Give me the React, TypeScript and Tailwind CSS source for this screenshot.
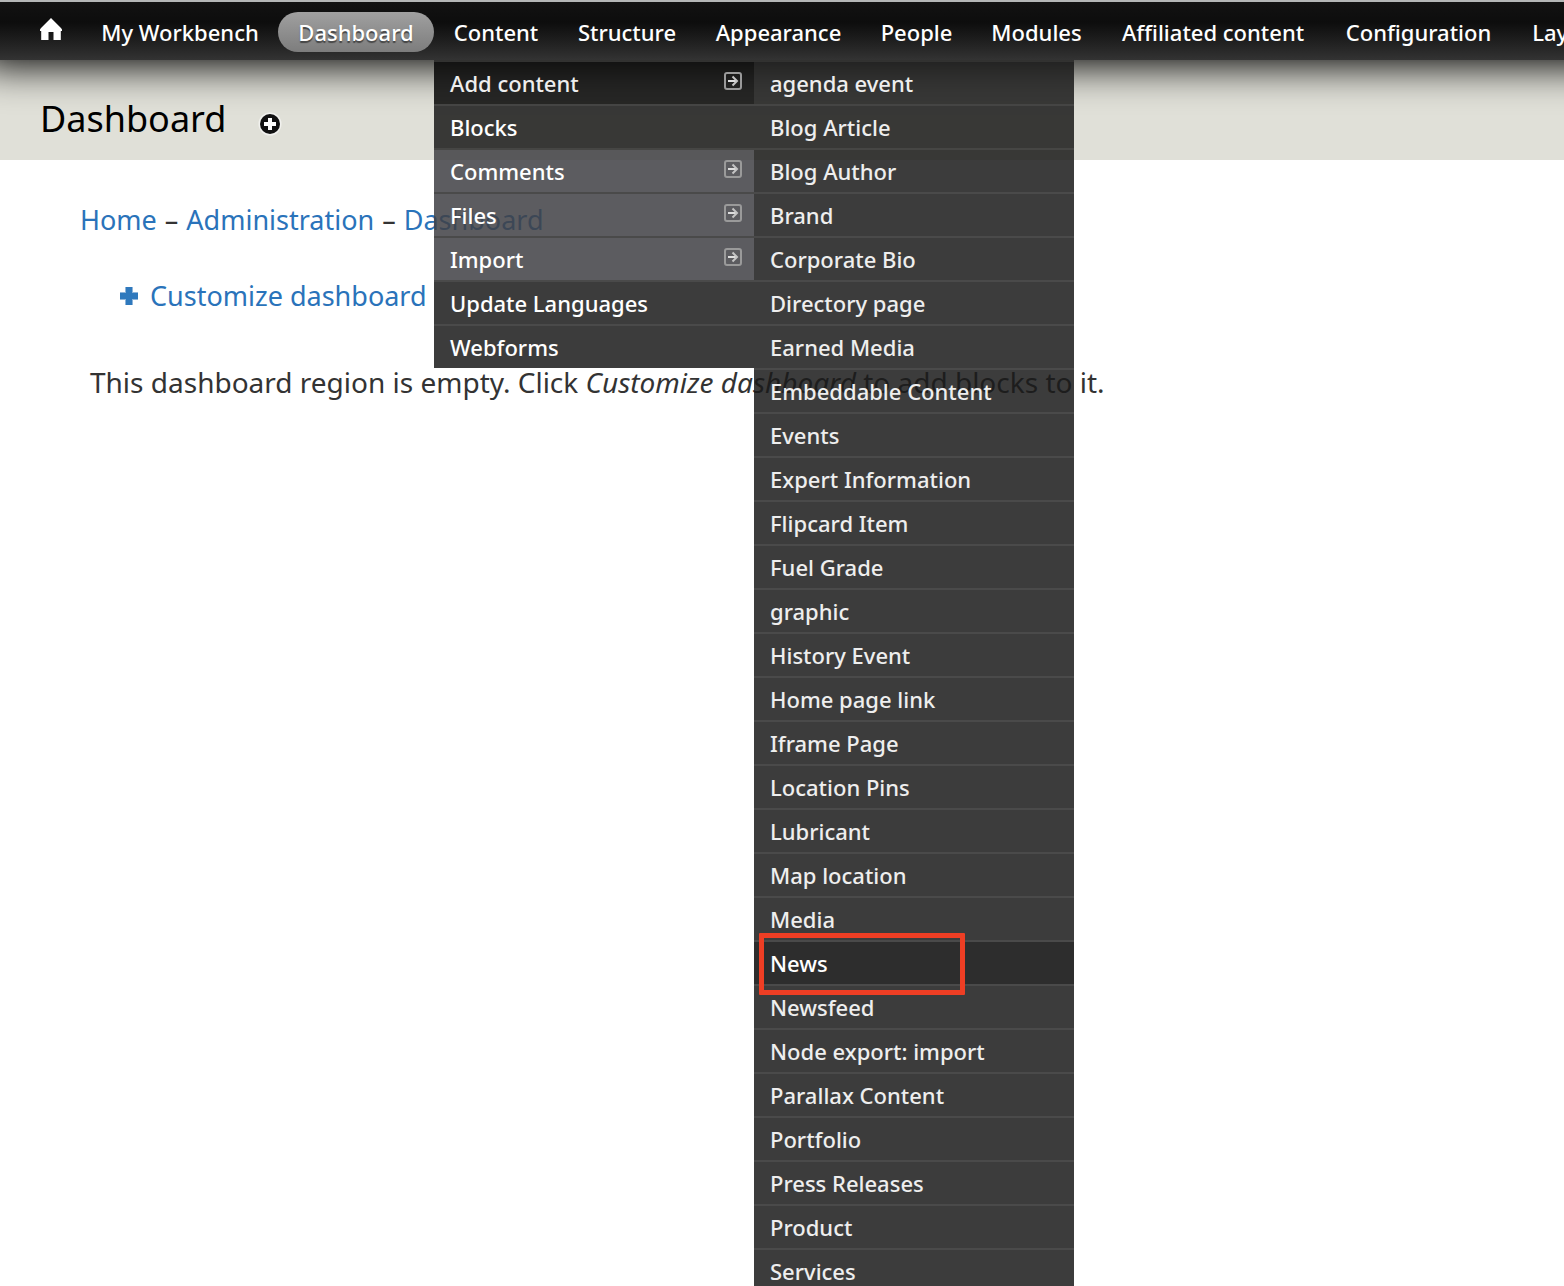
import React from "react";

const navItems = [
  { label: "My Workbench", width: "w-[196px]" },
  { label: "Dashboard", width: "w-[156px]", active: true },
  { label: "Content", width: "w-[124px]", menu: true },
  { label: "Structure", width: "w-[138px]" },
  { label: "Appearance", width: "w-[165px]" },
  { label: "People", width: "w-[111px]" },
  { label: "Modules", width: "w-[129px]" },
  { label: "Affiliated content", width: "w-[224px]" },
  { label: "Configuration", width: "w-[187px]" },
  { label: "Layout", width: "w-[112px]" },
];

const contentMenu = [
  { label: "Add content", tone: "bg-[#060606]/85 text-[#eeeeee]", arrow: true },
  { label: "Blocks", tone: "bg-[#1a1a1a]/85 text-white" },
  { label: "Comments", tone: "bg-[#403f44]/85 text-white", arrow: true },
  { label: "Files", tone: "bg-[#403f44]/85 text-white", arrow: true },
  { label: "Import", tone: "bg-[#403f44]/85 text-white", arrow: true },
  { label: "Update Languages", tone: "bg-[#1a1a1a]/85 text-white" },
  { label: "Webforms", tone: "bg-[#1a1a1a]/85 text-white" },
];

const contentTypes = [
  "agenda event",
  "Blog Article",
  "Blog Author",
  "Brand",
  "Corporate Bio",
  "Directory page",
  "Earned Media",
  "Embeddable Content",
  "Events",
  "Expert Information",
  "Flipcard Item",
  "Fuel Grade",
  "graphic",
  "History Event",
  "Home page link",
  "Iframe Page",
  "Location Pins",
  "Lubricant",
  "Map location",
  "Media",
  "News",
  "Newsfeed",
  "Node export: import",
  "Parallax Content",
  "Portfolio",
  "Press Releases",
  "Product",
  "Services",
];

const rowClass =
  "flex h-11 items-center border-t-2 border-[#2a2a2a]/85 bg-clip-padding px-4 text-[22px] leading-7 font-medium whitespace-nowrap";

function HomeIcon() {
  return (
    <svg className="mb-1" width="24" height="24" viewBox="0 0 24 24" fill="white" aria-hidden="true">
      <path d="M12 1 L22 11 Q23.5 12.5 23 14 L21.8 14 L21.8 23 L14.5 23 L14.5 15 L9.5 15 L9.5 23 L2.2 23 L2.2 14 L1 14 Q0.5 12.5 2 11 Z" />
    </svg>
  );
}

function ArrowIcon() {
  return (
    <svg className="mb-1 -mr-1" width="18" height="18" viewBox="0 0 18 18" fill="none" aria-hidden="true">
      <rect x="1" y="1" width="16" height="16" rx="2" stroke="#9a9a9a" strokeWidth="2" />
      <path d="M4 9H12" stroke="#dddddd" strokeWidth="2" />
      <path d="M8.5 4.5L13 9L8.5 13.5" stroke="#c4c4c4" strokeWidth="2" />
    </svg>
  );
}

function ContentTypeMenu() {
  return (
    <ul className="w-80">
      {contentTypes.map((label) => (
        <li key={label} className="relative">
          <a
            href="#"
            className={`${rowClass} ${
              label === "News" ? "bg-[#080808]/85 text-white" : "bg-[#1a1a1a]/85 text-[#eeeeee]"
            }`}
          >
            {label}
          </a>
          {label === "News" && (
            <span className="pointer-events-none absolute -top-[7px] left-[5px] z-10 h-[62px] w-[206px] rounded-[1px] border-[5px] border-[#ee3e24]" />
          )}
        </li>
      ))}
    </ul>
  );
}

function ContentMenu() {
  return (
    <div className="absolute top-full left-0 flex items-start">
      <ul className="w-80">
        {contentMenu.map((item) => (
          <li key={item.label}>
            <a href="#" className={`${rowClass} justify-between ${item.tone}`}>
              {item.label}
              {item.arrow && <ArrowIcon />}
            </a>
          </li>
        ))}
      </ul>
      <ContentTypeMenu />
    </div>
  );
}

function Toolbar() {
  return (
    <nav className="relative z-10 -mr-16 -ml-5 border-t-2 border-[#b4b6b6] bg-linear-to-b from-[#121212] via-[#0d0d0d] via-35% to-[#333333] pl-5 shadow-[0_6px_40px_#000000]">
      <ul className="flex h-[58px]">
        <li className="flex w-[82px] shrink-0 items-center pl-[39px]">
          <a href="#" aria-label="Home">
            <HomeIcon />
          </a>
        </li>
        {navItems.map((item) => (
          <li key={item.label} className={`relative flex shrink-0 items-center pt-0.5 ${item.width}`}>
            <a
              href="#"
              className={`flex h-10 w-full items-center justify-center rounded-full text-[22px] leading-10 font-medium whitespace-nowrap text-white ${
                item.active
                  ? "bg-linear-to-b from-[#a0a0a0] to-[#7d7d7d] [text-shadow:0_2px_1px_#444444]"
                  : ""
              }`}
            >
              {item.label}
            </a>
            {item.menu && <ContentMenu />}
          </li>
        ))}
      </ul>
    </nav>
  );
}

function AddShortcutIcon() {
  return (
    <svg width="24" height="24" viewBox="0 0 24 24" aria-hidden="true">
      <circle cx="12" cy="12" r="11.5" fill="#f1f1ee" />
      <circle cx="12" cy="12" r="10" fill="#111111" />
      <path d="M12 6V18M6 12H18" stroke="white" strokeWidth="4" />
    </svg>
  );
}

export default function App() {
  return (
    <div className="h-screen overflow-hidden bg-white font-['Noto_Sans','Open_Sans',sans-serif] text-[#333333]">
      <Toolbar />
      <header className="flex h-[100px] items-center gap-8 bg-[#e0e0d8] px-10 pt-[18px]">
        <h1 className="text-[36px] leading-10 text-black">Dashboard</h1>
        <button type="button" aria-label="Add to shortcuts" className="mt-2.5">
          <AddShortcutIcon />
        </button>
      </header>
      <main className="px-20 pt-10 text-[27px] leading-10">
        <nav aria-label="Breadcrumb" className="flex gap-2">
          <a href="#" className="text-[#2a73ba]">Home</a>
          <span>–</span>
          <a href="#" className="text-[#2a73ba]">Administration</a>
          <span>–</span>
          <a href="#" className="text-[#2a73ba]">Dashboard</a>
        </nav>
        <div className="mt-9 pl-10">
          <a href="#" className="flex items-center gap-3 text-[#2a73ba]">
            <svg width="18" height="18" viewBox="0 0 18 18" aria-hidden="true">
              <path d="M9 0V18M0 9H18" stroke="#8fb5da" strokeWidth="8" />
              <path d="M9 0V18M0 9H18" stroke="#2f79bd" strokeWidth="6" />
            </svg>
            Customize dashboard
          </a>
        </div>
        <p className="mt-[46px] pl-2.5 text-[28px] leading-10 whitespace-nowrap">
          This dashboard region is empty. Click <em>Customize dashboard</em> to add blocks to it.
        </p>
      </main>
    </div>
  );
}
